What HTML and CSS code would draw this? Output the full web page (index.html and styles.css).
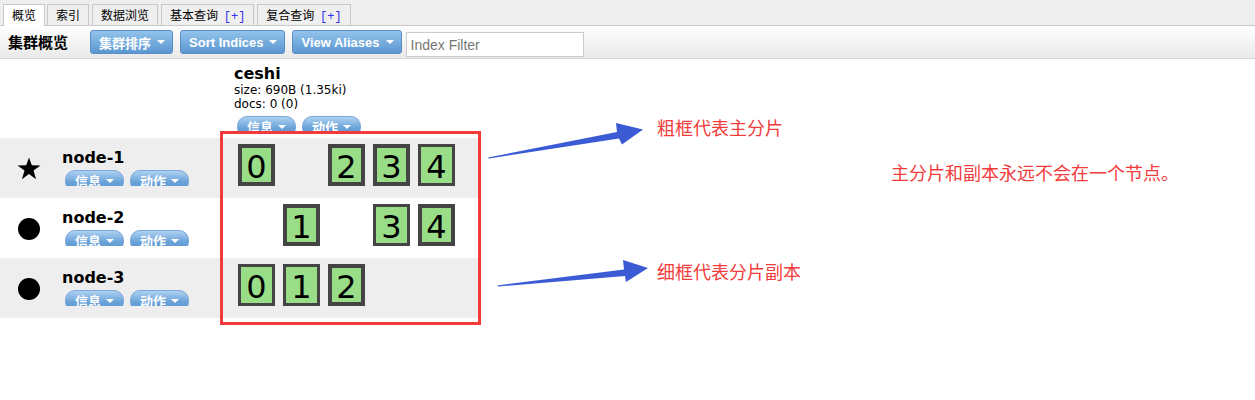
FILE: index.html
```html
<!DOCTYPE html>
<html lang="zh-CN">
<head>
<meta charset="utf-8">
<title>集群概览</title>
<link rel="stylesheet" href="styles.css">
</head>
<body>
<div class="tabs">
  <div class="tab active">概览</div>
  <div class="tab">索引</div>
  <div class="tab">数据浏览</div>
  <div class="tab">基本查询 <span class="plus">[+]</span></div>
  <div class="tab">复合查询 <span class="plus">[+]</span></div>
</div>
<div class="toolbar">
  <h1 class="title">集群概览</h1>
  <button class="btn">集群排序<span class="caret"></span></button>
  <button class="btn">Sort Indices<span class="caret"></span></button>
  <button class="btn">View Aliases<span class="caret"></span></button>
  <input class="filter" type="text" placeholder="Index Filter">
</div>

<div class="overview">
  <div class="row header">
    <div class="node-cell"></div>
    <div class="index-cell">
      <div class="index-name">ceshi</div>
      <div class="index-meta">size: 690B (1.35ki)</div>
      <div class="index-meta">docs: 0 (0)</div>
      <div class="pills">
        <div class="pill-clip"><div class="pill">信息<span class="pcaret"></span></div></div>
        <div class="pill-clip"><div class="pill">动作<span class="pcaret"></span></div></div>
      </div>
    </div>
  </div>

  <div class="row shade">
    <div class="node-cell">
      <div class="node-icon">
        <svg class="star" width="24" height="23" viewBox="0 0 24 23"><polygon points="12,0.5 14.8,8.3 23.5,8.4 16.5,13.6 19.1,22.3 12,17.1 4.9,22.3 7.5,13.6 0.5,8.4 9.2,8.3" fill="#000"/></svg>
      </div>
      <div class="node-info">
        <div class="node-name">node-1</div>
        <div class="pills">
          <div class="pill-clip"><div class="pill">信息<span class="pcaret"></span></div></div>
          <div class="pill-clip"><div class="pill">动作<span class="pcaret"></span></div></div>
        </div>
      </div>
    </div>
    <div class="shards">
      <div class="shard primary">0</div>
      <div class="shard empty"></div>
      <div class="shard primary">2</div>
      <div class="shard primary">3</div>
      <div class="shard">4</div>
    </div>
  </div>

  <div class="row">
    <div class="node-cell">
      <div class="node-icon"><span class="dot"></span></div>
      <div class="node-info">
        <div class="node-name">node-2</div>
        <div class="pills">
          <div class="pill-clip"><div class="pill">信息<span class="pcaret"></span></div></div>
          <div class="pill-clip"><div class="pill">动作<span class="pcaret"></span></div></div>
        </div>
      </div>
    </div>
    <div class="shards">
      <div class="shard empty"></div>
      <div class="shard primary">1</div>
      <div class="shard empty"></div>
      <div class="shard">3</div>
      <div class="shard primary">4</div>
    </div>
  </div>

  <div class="row shade">
    <div class="node-cell">
      <div class="node-icon"><span class="dot"></span></div>
      <div class="node-info">
        <div class="node-name">node-3</div>
        <div class="pills">
          <div class="pill-clip"><div class="pill">信息<span class="pcaret"></span></div></div>
          <div class="pill-clip"><div class="pill">动作<span class="pcaret"></span></div></div>
        </div>
      </div>
    </div>
    <div class="shards">
      <div class="shard">0</div>
      <div class="shard">1</div>
      <div class="shard primary">2</div>
    </div>
  </div>
</div>

<div class="mark-box"></div>
<svg class="arrows" width="1255" height="400" viewBox="0 0 1255 400">
  <polygon points="488,157.5 617,132 616,123 643,129.5 622,144.5 619,138.5 489,158.5" fill="#3a5bd4"/>
  <polygon points="497,285.5 624,269.5 623,260 648,268 626,282 625,276 498,286.5" fill="#3a5bd4"/>
</svg>
<div class="note note-1">粗框代表主分片</div>
<div class="note note-2">细框代表分片副本</div>
<div class="note note-3">主分片和副本永远不会在一个节点。</div>
</body>
</html>
```
FILE: styles.css
```css
* { box-sizing: border-box; }
html, body { margin: 0; padding: 0; background: #fff; }
body {
  font-family: "DejaVu Sans", Verdana, "Noto Sans CJK SC", sans-serif;
  color: #000;
  position: relative;
  min-height: 400px;
}

/* tabs */
.tabs {
  display: flex;
  align-items: flex-start;
  gap: 3px;
  height: 26px;
  padding: 4px 0 0 3px;
  background: #eeeeee;
  border-bottom: 1px solid #c9c9c9;
  font: 12px/20px "Noto Sans CJK SC", sans-serif;
}
.tab {
  height: 21px;
  padding: 0 8px;
  border: 1px solid #c8c8c8;
  border-bottom: 0;
  background: #efefef;
  color: #000;
  white-space: nowrap;
}
.tab.active {
  height: 22px;
  margin-right: -1px;
  background: #fff;
  position: relative;
}
.plus {
  margin-left: 3px;
  font-family: "Liberation Mono", monospace;
  color: #3030f0;
}

/* toolbar */
.toolbar {
  display: flex;
  align-items: flex-start;
  height: 33px;
  padding: 4px 0 0 8px;
  background: linear-gradient(#ffffff, #e9e9e9);
  border-bottom: 1px solid #d6d6d6;
}
.title {
  margin: 0 22px 0 0;
  font: bold 15px/24px "Noto Sans CJK SC", sans-serif;
}
.btn {
  display: flex;
  align-items: center;
  height: 24px;
  margin: 0 7px 0 0;
  padding: 0 7px 0 8px;
  border: 1px solid #5b8cc6;
  border-radius: 3px;
  background: linear-gradient(#92c3eb, #5b97d0);
  color: #fff;
  font: bold 13px "Liberation Sans", "Noto Sans CJK SC", sans-serif;
  white-space: nowrap;
}
.caret {
  width: 0;
  height: 0;
  margin-left: 6px;
  border-left: 4px solid transparent;
  border-right: 4px solid transparent;
  border-top: 4px solid #fff;
}
.filter {
  margin: 2px 0 0 -3px;
  width: 178px;
  height: 25px;
  padding: 0 4px;
  border: 1px solid #cccccc;
  background: #fff;
  font: 14px "Liberation Sans", sans-serif;
  color: #333;
  outline: none;
}
.filter::placeholder { color: #777; }

/* overview table */
.overview { width: 481px; }
.row { display: flex; height: 60px; }
.row.shade { background: #eeeeee; }
.row.header { height: 79px; }
.node-cell { width: 233px; flex: none; display: flex; }
.node-icon {
  width: 58px;
  display: flex;
  align-items: center;
  justify-content: center;
  padding-top: 1px;
}
.dot { width: 22px; height: 22px; border-radius: 50%; background: #000; }
.node-info { padding: 11px 0 0 4px; }
.node-name { font-weight: bold; font-size: 16px; line-height: 18px; }

.index-cell { padding: 6px 0 0 1px; }
.index-name { font-weight: bold; font-size: 16px; line-height: 18px; }
.index-meta { font-size: 12px; line-height: 14px; }
.index-cell .pills { margin-top: 5px; }

.pills { display: flex; gap: 6px; margin: 3px 0 0 3px; }
.pill-clip { width: 59px; height: 16px; overflow: hidden; }
.pill {
  display: flex;
  justify-content: center;
  width: 59px;
  height: 22px;
  border: 1px solid #7aa6d9;
  border-radius: 10px;
  background: linear-gradient(#aed2f2, #6aa2d8 55%, #5a94cf);
  color: #fff;
  font: bold 13px/19px "Noto Sans CJK SC", sans-serif;
}
.pcaret {
  width: 0;
  height: 0;
  margin: 8px 0 0 5px;
  border-left: 4px solid transparent;
  border-right: 4px solid transparent;
  border-top: 4px solid #fff;
}

/* shards */
.shards { display: flex; gap: 8px; padding: 6px 0 0 5px; }
.shard {
  width: 37px;
  height: 42px;
  background: #99dd88;
  border: 3px solid #444;
  font: 32px/40px "DejaVu Sans", Verdana, sans-serif;
  text-align: center;
  overflow: hidden;
}
.shard.primary { border-width: 4px; line-height: 38px; }
.shard.empty { visibility: hidden; }

/* annotations drawn over the screenshot */
.mark-box {
  position: absolute;
  left: 220px;
  top: 131px;
  width: 261px;
  height: 194px;
  border: 3px solid #f23a3a;
}
.arrows { position: absolute; left: 0; top: 0; pointer-events: none; }
.note {
  position: absolute;
  font: 18px/18px "Noto Sans CJK SC", sans-serif;
  color: #f23c3c;
  white-space: nowrap;
}
.note-1 { left: 657px; top: 118px; }
.note-2 { left: 657px; top: 262px; }
.note-3 { left: 891px; top: 163px; }
```
